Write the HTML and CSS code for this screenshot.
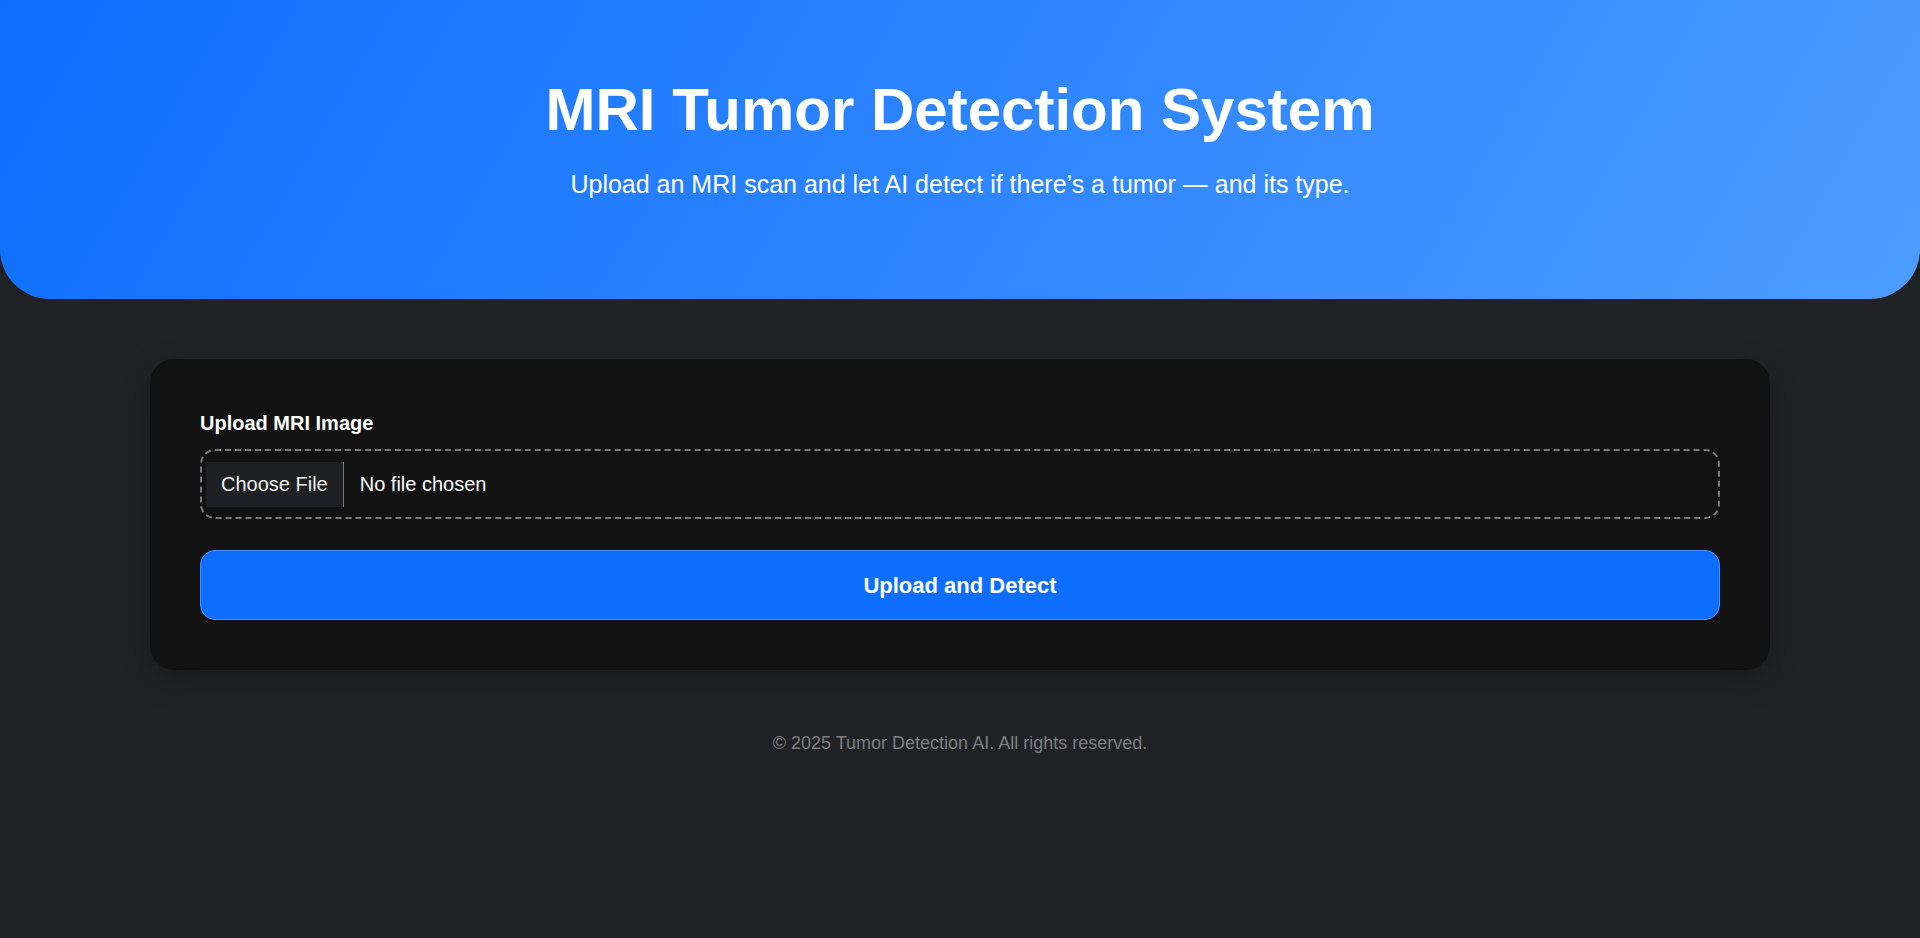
FILE: index.html
```html
<!DOCTYPE html>
<html lang="en">
<head>
<meta charset="utf-8">
<title>MRI Tumor Detection System</title>
<link rel="stylesheet" href="styles.css">
</head>
<body>
<header class="hero">
  <h1 class="hero-title">MRI Tumor Detection System</h1>
  <p class="hero-sub">Upload an MRI scan and let AI detect if there’s a tumor — and its type.</p>
</header>
<main class="main">
  <form class="card">
    <label class="field-label">Upload MRI Image</label>
    <div class="file-box">
      <span class="file-btn">Choose File</span>
      <span class="file-name">No file chosen</span>
    </div>
    <button type="button" class="submit-btn">Upload and Detect</button>
  </form>
</main>
<footer class="footer">© 2025 Tumor Detection AI. All rights reserved.</footer>
</body>
</html>
```
FILE: styles.css
```css
* { box-sizing: border-box; }
html, body { margin: 0; padding: 0; }
body {
  background: #212225;
  color: #fff;
  font-family: "Liberation Sans", Arial, sans-serif;
  min-height: 938px;
}
.hero {
  height: 299px;
  padding-top: 76px;
  text-align: center;
  background: linear-gradient(120deg, #0d6efd 0%, #2a82ff 45%, #4d9cff 100%);
  border-radius: 0 0 50px 50px;
}
.hero-title {
  margin: 0;
  font-size: 60px;
  font-weight: 700;
  line-height: 67px;
}
.hero-sub {
  margin: 27px 0 0;
  font-size: 25px;
  line-height: 29px;
}
.main {
  padding: 60px 150px 0;
}
.card {
  display: flex;
  flex-direction: column;
  background: #121212;
  border-radius: 24px;
  padding: 50px;
  box-shadow: 0 10px 30px rgba(0, 0, 0, 0.25);
}
.field-label {
  margin-top: 3px;
  font-size: 20px;
  font-weight: 700;
  line-height: 23px;
  margin-bottom: 14px;
}
.file-box {
  display: flex;
  align-items: center;
  height: 70px;
  padding: 11px 4px 10px;
  border: 2px dashed #7a7a7a;
  border-radius: 15px;
  font-size: 20px;
}
.file-btn {
  display: flex;
  align-items: center;
  height: 45px;
  padding: 0 15px;
  background: #1f2023;
  border-right: 1px solid #777;
  color: #f2f2f2;
}
.file-name {
  margin-left: 16px;
  color: #fff;
}
.submit-btn {
  margin-top: 31px;
  height: 70px;
  padding-top: 2px;
  background: #0d6efd;
  border: 1px solid #4a90fd;
  border-radius: 15px;
  color: #fff;
  font-family: "Liberation Sans", Arial, sans-serif;
  font-size: 22px;
  font-weight: 700;
  cursor: pointer;
}
.footer {
  margin-top: 63px;
  text-align: center;
  font-size: 18px;
  line-height: 21px;
  color: #7d7f82;
}
```
